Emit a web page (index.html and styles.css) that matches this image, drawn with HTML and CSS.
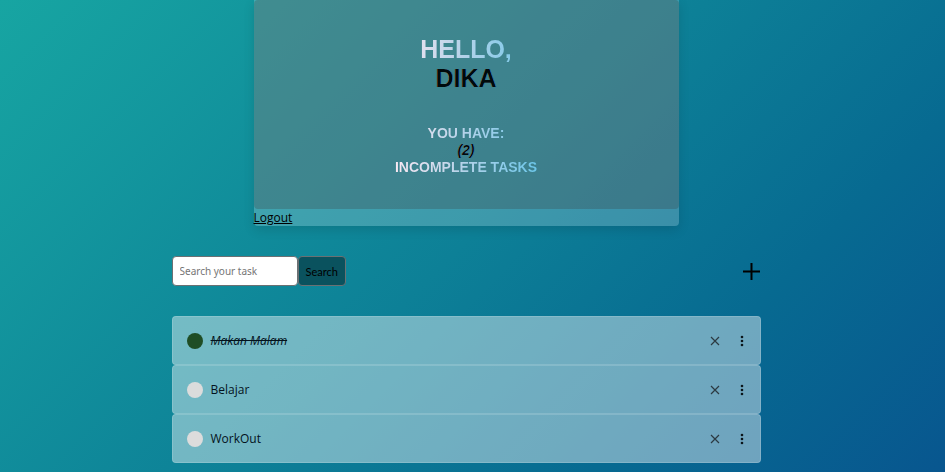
FILE: index.html
```html
<!DOCTYPE html>
<html lang="en">
<head>
<meta charset="utf-8">
<title>Tasks</title>
<link rel="stylesheet" href="styles.css">
</head>
<body>
<main class="page">
  <header class="card">
    <div class="greeting">
      <div class="greeting-text">
        <h1>HELLO,<br><span class="dark">DIKA</span></h1>
        <h2>YOU HAVE:<br><i class="dark">(2)</i><br>INCOMPLETE TASKS</h2>
      </div>
    </div>
    <a class="logout" href="#">Logout</a>
  </header>
  <section class="content">
    <div class="toolbar">
      <form class="search">
        <input type="text" placeholder="Search your task" aria-label="Search your task">
        <button type="button">Search</button>
      </form>
      <a class="add" href="#" aria-label="Add task"><svg width="20" height="20" viewBox="0 0 20 20"><path d="M10.500 2v17M2 10.500h17"/></svg></a>
    </div>
    <ul class="tasks">
      <li class="task done">
        <span class="dot"></span><a class="name" href="#">Makan Malam</a>
        <button class="icon" type="button" aria-label="Delete"><svg class="cross" width="12" height="12" viewBox="0 0 12 12"><path d="M2 2l8 8M10 2l-8 8"/></svg></button>
        <button class="icon" type="button" aria-label="More"><svg class="dots" width="12" height="12" viewBox="0 0 12 12"><circle cx="6" cy="2" r="1.3"/><circle cx="6" cy="6" r="1.3"/><circle cx="6" cy="10" r="1.3"/></svg></button>
      </li>
      <li class="task">
        <span class="dot"></span><a class="name" href="#">Belajar</a>
        <button class="icon" type="button" aria-label="Delete"><svg class="cross" width="12" height="12" viewBox="0 0 12 12"><path d="M2 2l8 8M10 2l-8 8"/></svg></button>
        <button class="icon" type="button" aria-label="More"><svg class="dots" width="12" height="12" viewBox="0 0 12 12"><circle cx="6" cy="2" r="1.3"/><circle cx="6" cy="6" r="1.3"/><circle cx="6" cy="10" r="1.3"/></svg></button>
      </li>
      <li class="task">
        <span class="dot"></span><a class="name" href="#">WorkOut</a>
        <button class="icon" type="button" aria-label="Delete"><svg class="cross" width="12" height="12" viewBox="0 0 12 12"><path d="M2 2l8 8M10 2l-8 8"/></svg></button>
        <button class="icon" type="button" aria-label="More"><svg class="dots" width="12" height="12" viewBox="0 0 12 12"><circle cx="6" cy="2" r="1.3"/><circle cx="6" cy="6" r="1.3"/><circle cx="6" cy="10" r="1.3"/></svg></button>
      </li>
    </ul>
  </section>
</main>
</body>
</html>
```

FILE: styles.css
```css
* { box-sizing: border-box; margin: 0; padding: 0; }

html {
  min-height: 100%;
  background: linear-gradient(135deg, #17a5a2, #0d8097 50%, #076a91 75%, #08568f);
}

body {
  padding-right: 13px;
  font: 500 12px/17px "Open Sans", "Noto Sans", sans-serif;
  color: #03121c;
}

.page {
  display: flex;
  flex-direction: column;
  align-items: center;
  gap: 30px;
  padding-bottom: 8px;
}

.card {
  width: 100%;
  max-width: 425px;
  background: rgba(255, 255, 255, 0.2);
  border-radius: 0 0 4px 4px;
  box-shadow: 0 4px 12px rgba(0, 0, 0, 0.12);
}

.greeting {
  display: flex;
  justify-content: center;
  padding: 35px 0 33px;
  background: rgba(60, 60, 60, 0.28);
  border-radius: 4px;
}

.greeting-text {
  display: flex;
  flex-direction: column;
  gap: 32px;
  font-family: "Liberation Sans", Arial, sans-serif;
  text-align: center;
  color: transparent;
  background: linear-gradient(to right, #f9e8f2, #b9d3e9 45%, #6cc6e9);
  -webkit-background-clip: text;
  background-clip: text;
}

h1 { font-size: 25px; line-height: 29px; }
h2 { font-size: 14px; line-height: 17px; }
.dark { color: #000a0c; }

.logout {
  display: block;
  width: max-content;
  color: #000;
}

.content {
  width: 100%;
  max-width: 589px;
  display: flex;
  flex-direction: column;
  gap: 30px;
}

.toolbar, .search, .task { display: flex; align-items: center; }
.toolbar { justify-content: space-between; }

.search input, .search button {
  height: 30px;
  border: 1px solid #6b7073;
  border-radius: 4px;
}

.search input {
  width: 126px;
  padding: 0 7px;
  font: 10px "Noto Sans", "Open Sans", sans-serif;
  background: #fff;
}

.search input::placeholder { color: #757575; }

.search button {
  padding: 0 7px;
  font: 11px Lato, "Noto Sans", sans-serif;
  color: #000;
  background: #0a525e;
}

.add { display: flex; }
.add svg { fill: none; stroke: #000; stroke-width: 2; }

.tasks { list-style: none; }

.task {
  height: 49px;
  padding: 0 12px 0 14px;
  background: rgba(255, 255, 255, 0.42);
  border: 1px solid rgba(255, 255, 255, 0.15);
  border-radius: 4px;
}

.dot {
  width: 16px;
  height: 16px;
  margin-right: 8px;
  border-radius: 50%;
  background: #dcdcdc;
}

.done .dot { background: #1f4d25; }
.name { margin-right: auto; color: inherit; text-decoration: none; }
.done .name { font-style: italic; text-decoration: line-through; }

.icon { display: flex; border: 0; background: none; }
.icon + .icon { margin-left: 15px; }
.cross { fill: none; stroke: #2c3a42; stroke-width: 1.2; }
.dots { fill: #0b151a; }
```
